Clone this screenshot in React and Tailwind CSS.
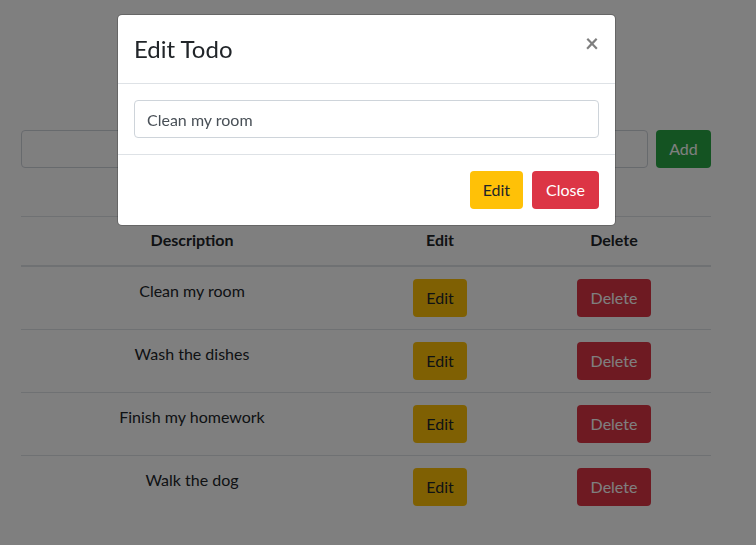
import React, { useState } from 'react';

const todos = [
  { id: 1, description: 'Clean my room' },
  { id: 2, description: 'Wash the dishes' },
  { id: 3, description: 'Finish my homework' },
  { id: 4, description: 'Walk the dog' },
];

const font = { fontFamily: 'Lato, "Noto Sans", sans-serif' };

const App = () => {
  const [text, setText] = useState('Clean my room');

  return (
    <div className="relative min-h-[545px] bg-white text-[#212529]" style={font}>
      {/* Page behind the modal */}
      <div className="mx-[21px] w-[690px] pt-[130px]">
        <div className="flex gap-2">
          <input className="h-[38px] flex-1 rounded border border-[#ced4da] px-3 text-base outline-none" />
          <button className="h-[38px] w-[55px] rounded bg-[#28a745] text-base text-white">Add</button>
        </div>

        <table className="mt-[48px] w-full border-collapse text-center text-base">
          <thead>
            <tr className="border-t border-[#dee2e6]">
              <th className="w-[342px] border-b-2 border-[#dee2e6] px-3 pb-[13px] pt-[11px] font-bold leading-6">Description</th>
              <th className="w-[154px] border-b-2 border-[#dee2e6] px-3 pb-[13px] pt-[11px] font-bold leading-6">Edit</th>
              <th className="border-b-2 border-[#dee2e6] px-3 pb-[13px] pt-[11px] font-bold leading-6">Delete</th>
            </tr>
          </thead>
          <tbody>
            {todos.map((todo, i) => (
              <tr key={todo.id} className={i > 0 ? 'border-t border-[#dee2e6]' : ''}>
                <td className="p-3 align-top leading-6">{todo.description}</td>
                <td className="p-3 align-top">
                  <button className="h-[38px] rounded bg-[#ffc107] px-[13px] text-[#212529]">Edit</button>
                </td>
                <td className="p-3 align-top">
                  <button className="h-[38px] rounded bg-[#dc3545] px-[14px] text-white">Delete</button>
                </td>
              </tr>
            ))}
          </tbody>
        </table>
      </div>

      {/* Modal backdrop + dialog */}
      <div className="fixed inset-0 bg-black/50">
        <div className="ml-[117px] mt-[14px] w-[499px] rounded-[5px] border border-black/20 bg-white bg-clip-padding">
          <div className="flex items-start border-b border-[#dee2e6] p-4">
            <h4 className="text-2xl leading-9 text-[#212529]">Edit Todo</h4>
            <button className="-m-4 ml-auto p-4 text-2xl font-bold leading-6 text-black opacity-50">×</button>
          </div>
          <div className="p-4">
            <input
              value={text}
              onChange={(e) => setText(e.target.value)}
              className="h-[38px] w-full rounded border border-[#ced4da] px-3 text-base text-[#495057] outline-none"
            />
          </div>
          <div className="flex justify-end gap-[9px] border-t border-[#dee2e6] p-3 [&>button]:my-1">
            <button className="h-[38px] rounded bg-[#ffc107] px-[13px] text-base text-[#212529]">Edit</button>
            <button className="mr-1 h-[38px] rounded bg-[#dc3545] px-[14px] text-base text-white">Close</button>
          </div>
        </div>
      </div>
    </div>
  );
};

export default App;
